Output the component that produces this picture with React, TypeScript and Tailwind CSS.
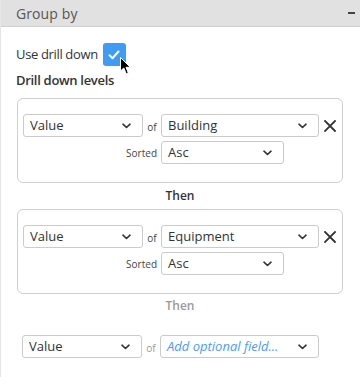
import React from "react";

const Chevron = () => (
  <svg width="9" height="6" viewBox="0 0 9 6" className="shrink-0">
    <path d="M1 1.2 L4.5 4.5 L8 1.2" fill="none" stroke="#333" strokeWidth="1.6" strokeLinecap="round" strokeLinejoin="round" />
  </svg>
);

const Select = ({ label, w, placeholder }: { label: string; w: string; placeholder?: boolean }) => (
  <div className={`${w} h-[23px] border border-[#cbcbcb] rounded-[3px] bg-white flex items-center justify-between pl-[6px] pr-[11px]`}>
    <span className={placeholder ? "text-[13px] italic text-[#4b9cf2]" : "text-[13px] text-[#333]"}>{label}</span>
    <Chevron />
  </div>
);

const XIcon = () => (
  <svg width="12" height="12" viewBox="0 0 12 12" className="ml-[5px] shrink-0">
    <path d="M1 1 L11 11 M11 1 L1 11" stroke="#333" strokeWidth="1.8" strokeLinecap="square" />
  </svg>
);

const Level = ({ field }: { field: string }) => (
  <div className="ml-px w-[326px] h-[85px] border border-[#cfcfcf] rounded-[6px] pt-[15px] pl-[5px] flex flex-col gap-[4px]">
    <div className="flex items-center">
      <Select label="Value" w="w-[120px]" />
      <span className="w-[18px] text-center text-[10px] text-[#444] pt-[3px]">of</span>
      <Select label={field} w="w-[158px]" />
      <XIcon />
    </div>
    <div className="flex items-center">
      <span className="w-[138px] pr-[4px] text-right text-[10px] text-[#444] pt-[2px]">Sorted</span>
      <Select label="Asc" w="w-[123px]" />
    </div>
  </div>
);

export default function App() {
  return (
    <div
      className="w-[360px] h-[377px] bg-white border-l border-[#e6e6e6] relative overflow-hidden"
      style={{ fontFamily: '"Open Sans", "Noto Sans", sans-serif' }}
    >
      <div className="h-[27px] bg-[#e1e1e1] border-b border-[#cfcfcf] flex items-center justify-between pl-[15px] pr-[5px]">
        <span className="text-[14px] text-[#555] tracking-[0.1px]">Group by</span>
        <div className="w-[7px] h-[2px] bg-[#444]" />
      </div>
      <div className="pl-[15px] flex flex-col">
        <div className="flex items-center mt-[16px] h-[23px]">
          <span className="text-[13px] text-[#333] tracking-[-0.35px]">Use drill down</span>
          <div className="ml-[5px] w-[23px] h-[23px] rounded-[3px] bg-[#3f9cf4] flex items-center justify-center">
            <svg width="12" height="10" viewBox="0 0 12 10">
              <path d="M1.5 5.2 L4.6 8.2 L10.5 1.5" fill="none" stroke="white" strokeWidth="2" strokeLinecap="round" strokeLinejoin="round" />
            </svg>
          </div>
        </div>
        <div className="mt-[6px] h-[16px] leading-[16px] text-[13px] font-semibold text-[#333] tracking-[-0.3px]">Drill down levels</div>
        <div className="mt-[10px]">
          <Level field="Building" />
        </div>
        <div className="h-[26px] ml-px w-[326px] flex items-center justify-center text-[12px] font-semibold text-[#333]">Then</div>
        <Level field="Equipment" />
        <div className="h-[24px] ml-px w-[326px] flex items-center justify-center text-[12px] font-semibold text-[#999]">Then</div>
        <div className="flex items-center mt-[17px] ml-[6px]">
          <Select label="Value" w="w-[120px]" />
          <span className="w-[18px] text-center text-[10px] text-[#999] pt-[3px]">of</span>
          <Select label="Add optional field..." w="w-[159px]" placeholder />
        </div>
      </div>
      <svg className="absolute left-[119px] top-[57px]" width="11" height="18" viewBox="0 0 11 18">
        <path d="M0.5 0.5 L0.5 14 L3.8 11 L6.2 16.8 L8.3 15.9 L6 10.3 L10.3 10.3 Z" fill="black" stroke="white" strokeWidth="1" />
      </svg>
    </div>
  );
}
